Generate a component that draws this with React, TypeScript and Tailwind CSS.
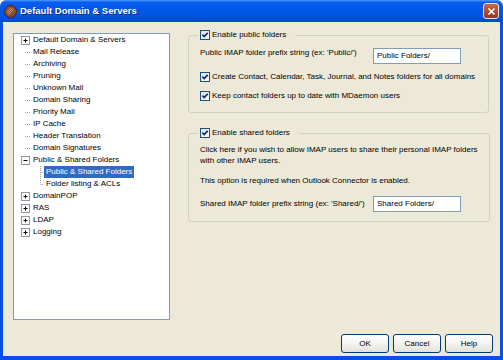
import React from "react";

const FONT = "font-['Liberation_Sans',Arial,sans-serif]";

function Checkbox() {
  return (
    <svg width="10" height="10" viewBox="0 0 10 10" className="shrink-0 block">
      <defs>
        <linearGradient id="cbg" x1="0" y1="0" x2="1" y2="1">
          <stop offset="0" stopColor="#dcdcd7" />
          <stop offset="1" stopColor="#ffffff" />
        </linearGradient>
      </defs>
      <rect x="0.5" y="0.5" width="9" height="9" fill="url(#cbg)" stroke="#1C5180" />
      <path d="M2.4 4.6 L4.2 6.5 L7.7 2.9" stroke="#142a5c" strokeWidth="1.6" fill="none" />
    </svg>
  );
}

function Expander({ open }: { open?: boolean }) {
  return (
    <svg width="17" height="12" viewBox="0 0 17 12" className="shrink-0 block">
      <rect x="7.5" y="2.5" width="8" height="8" fill="#ffffff" stroke="#8C98A4" />
      <path d="M9.5 6.5h4" stroke="#000" />
      {!open && <path d="M11.5 4.5v4" stroke="#000" />}
    </svg>
  );
}

function LeafLine() {
  return (
    <svg width="17" height="12" viewBox="0 0 17 12" className="shrink-0 block">
      <path d="M11 6.5H18" stroke="#A0A0A0" strokeDasharray="1 1" fill="none" />
    </svg>
  );
}

function ChildLine({ last }: { last?: boolean }) {
  return (
    <svg width="30" height="12" viewBox="0 0 30 12" className="shrink-0 block">
      <path
        d={last ? "M26.5 0V6.5H30" : "M26.5 0V12M26.5 6.5H30"}
        stroke="#A0A0A0"
        strokeDasharray="1 1"
        fill="none"
      />
    </svg>
  );
}

type Item = { label: string; kind: "plus" | "minus" | "leaf" };

const topItems: Item[] = [
  { label: "Default Domain & Servers", kind: "plus" },
  { label: "Mail Release", kind: "leaf" },
  { label: "Archiving", kind: "leaf" },
  { label: "Pruning", kind: "leaf" },
  { label: "Unknown Mail", kind: "leaf" },
  { label: "Domain Sharing", kind: "leaf" },
  { label: "Priority Mail", kind: "leaf" },
  { label: "IP Cache", kind: "leaf" },
  { label: "Header Translation", kind: "leaf" },
  { label: "Domain Signatures", kind: "leaf" },
  { label: "Public & Shared Folders", kind: "minus" },
];

const bottomItems: Item[] = [
  { label: "DomainPOP", kind: "plus" },
  { label: "RAS", kind: "plus" },
  { label: "LDAP", kind: "plus" },
  { label: "Logging", kind: "plus" },
];

function TopRow({ item }: { item: Item }) {
  return (
    <div className="flex items-center h-[12px]">
      {item.kind === "leaf" ? <LeafLine /> : <Expander open={item.kind === "minus"} />}
      <span className="px-[2px] h-[12px] leading-[12px] whitespace-nowrap">{item.label}</span>
    </div>
  );
}

function Tree() {
  return (
    <div className="mt-[3px] w-[157px] h-[287px] border border-[#7F9DB9] bg-white text-black">
      {topItems.map((it) => (
        <TopRow key={it.label + it.kind} item={it} />
      ))}
      <div className="flex items-center h-[12px]">
        <ChildLine />
        <span className="px-[2px] h-[12px] leading-[12px] whitespace-nowrap bg-[#316AC5] text-white">
          Public &amp; Shared Folders
        </span>
      </div>
      <div className="flex items-center h-[12px]">
        <ChildLine last />
        <span className="px-[2px] h-[12px] leading-[12px] whitespace-nowrap">Folder listing &amp; ACLs</span>
      </div>
      {bottomItems.map((it) => (
        <TopRow key={it.label} item={it} />
      ))}
    </div>
  );
}

function Input({ value }: { value: string }) {
  return (
    <div className="w-[88px] h-[16px] border border-[#7F9DB9] bg-white pl-[3px] flex items-center leading-[14px]">
      {value}
    </div>
  );
}

function CheckRow({ label }: { label: string }) {
  return (
    <div className="flex items-center gap-[2px] h-[10px]">
      <Checkbox />
      <span className="whitespace-nowrap leading-[10px]">{label}</span>
    </div>
  );
}

function Button({ label }: { label: string }) {
  return (
    <div className="w-[48px] h-[19px] rounded-[3px] border border-[#003C74] bg-[linear-gradient(180deg,#ffffff_0%,#f3f3ef_50%,#e3e1d8_100%)] flex items-center justify-center text-black">
      {label}
    </div>
  );
}

export default function App() {
  return (
    <div className={`${FONT} text-[8px] w-[503px] h-[360px] bg-white`}>
      <div className="w-[503px] h-[360px] flex flex-col rounded-t-[7px] bg-[#0A4FE3] overflow-hidden">
        {/* Title bar */}
        <div className="h-[22px] shrink-0 flex items-center bg-[linear-gradient(180deg,#4d9bff_0%,#0a5ff2_10%,#0057ea_40%,#0054e3_70%,#0049d4_100%)]">
          <svg width="13" height="13" viewBox="0 0 13 13" className="ml-[4px] shrink-0 block">
            <circle cx="6.5" cy="6.5" r="6" fill="#8A4B2E" stroke="#4E2412" />
            <path d="M3.5 8.5 L8.5 3.5 M4.5 9.8 L9.8 4.5 M3 6.8 L6.8 3" stroke="#D9A888" strokeWidth="0.9" />
          </svg>
          <span className="ml-[3px] text-white font-bold text-[9.5px] whitespace-nowrap [text-shadow:1px_1px_0_#0a2a8a]">
            Default Domain &amp; Servers
          </span>
          <div className="ml-auto mr-[4px] w-[16px] h-[16px] rounded-[3px] border border-[#e8e0dc] bg-[linear-gradient(180deg,#c9694d_0%,#a84b30_60%,#8f3a22_100%)] flex items-center justify-center">
            <svg width="9" height="9" viewBox="0 0 9 9" className="block">
              <path d="M1.5 1.5 L7.5 7.5 M7.5 1.5 L1.5 7.5" stroke="#ffffff" strokeWidth="1.7" />
            </svg>
          </div>
        </div>

        {/* Client area */}
        <div className="flex-1 mx-[3px] mb-[4px] bg-[#ECE9D8] flex flex-col text-black">
          <div className="flex pt-[8px] pl-[10px] gap-[18px]">
            <Tree />
            <div className="flex flex-col w-[301px]">
              {/* Group 1 */}
              <fieldset className="border border-[#D0D0BF] rounded-[3px]">
                <legend className="ml-[9px] pl-[2px] pr-[9px]">
                  <div className="flex items-center gap-[2px] h-[10px]">
                    <Checkbox />
                    <span className="whitespace-nowrap leading-[10px]">Enable public folders</span>
                  </div>
                </legend>
                <div className="px-[11px] pt-[8px] pb-[11px] flex flex-col">
                  <div className="flex items-start h-[16px]">
                    <span className="w-[173px] whitespace-nowrap leading-[10px]">
                      Public IMAP folder prefix string (ex: 'Public/')
                    </span>
                    <Input value="Public Folders/" />
                  </div>
                  <div className="mt-[8px]">
                    <CheckRow label="Create Contact, Calendar, Task, Journal, and Notes folders for all domains" />
                  </div>
                  <div className="mt-[9px]">
                    <CheckRow label="Keep contact folders up to date with MDaemon users" />
                  </div>
                </div>
              </fieldset>

              {/* Group 2 */}
              <fieldset className="mt-[15px] border border-[#D0D0BF] rounded-[3px]">
                <legend className="ml-[9px] pl-[2px] pr-[9px]">
                  <div className="flex items-center gap-[2px] h-[10px]">
                    <Checkbox />
                    <span className="whitespace-nowrap leading-[10px]">Enable shared folders</span>
                  </div>
                </legend>
                <div className="px-[11px] pt-[6px] pb-[9px] flex flex-col">
                  <p className="leading-[11px] w-[278px]">
                    Click here if you wish to allow IMAP users to share their personal IMAP folders with other IMAP users.
                  </p>
                  <p className="leading-[11px] mt-[9px]">
                    This option is required when Outlook Connector is enabled.
                  </p>
                  <div className="flex items-center h-[16px] mt-[10px]">
                    <span className="w-[173px] whitespace-nowrap leading-[10px]">
                      Shared IMAP folder prefix string (ex: 'Shared/')
                    </span>
                    <Input value="Shared Folders/" />
                  </div>
                </div>
              </fieldset>
            </div>
          </div>

          <div className="mt-auto mb-[3px] flex justify-end gap-[4px] pr-[7px]">
            <Button label="OK" />
            <Button label="Cancel" />
            <Button label="Help" />
          </div>
        </div>
      </div>
    </div>
  );
}
